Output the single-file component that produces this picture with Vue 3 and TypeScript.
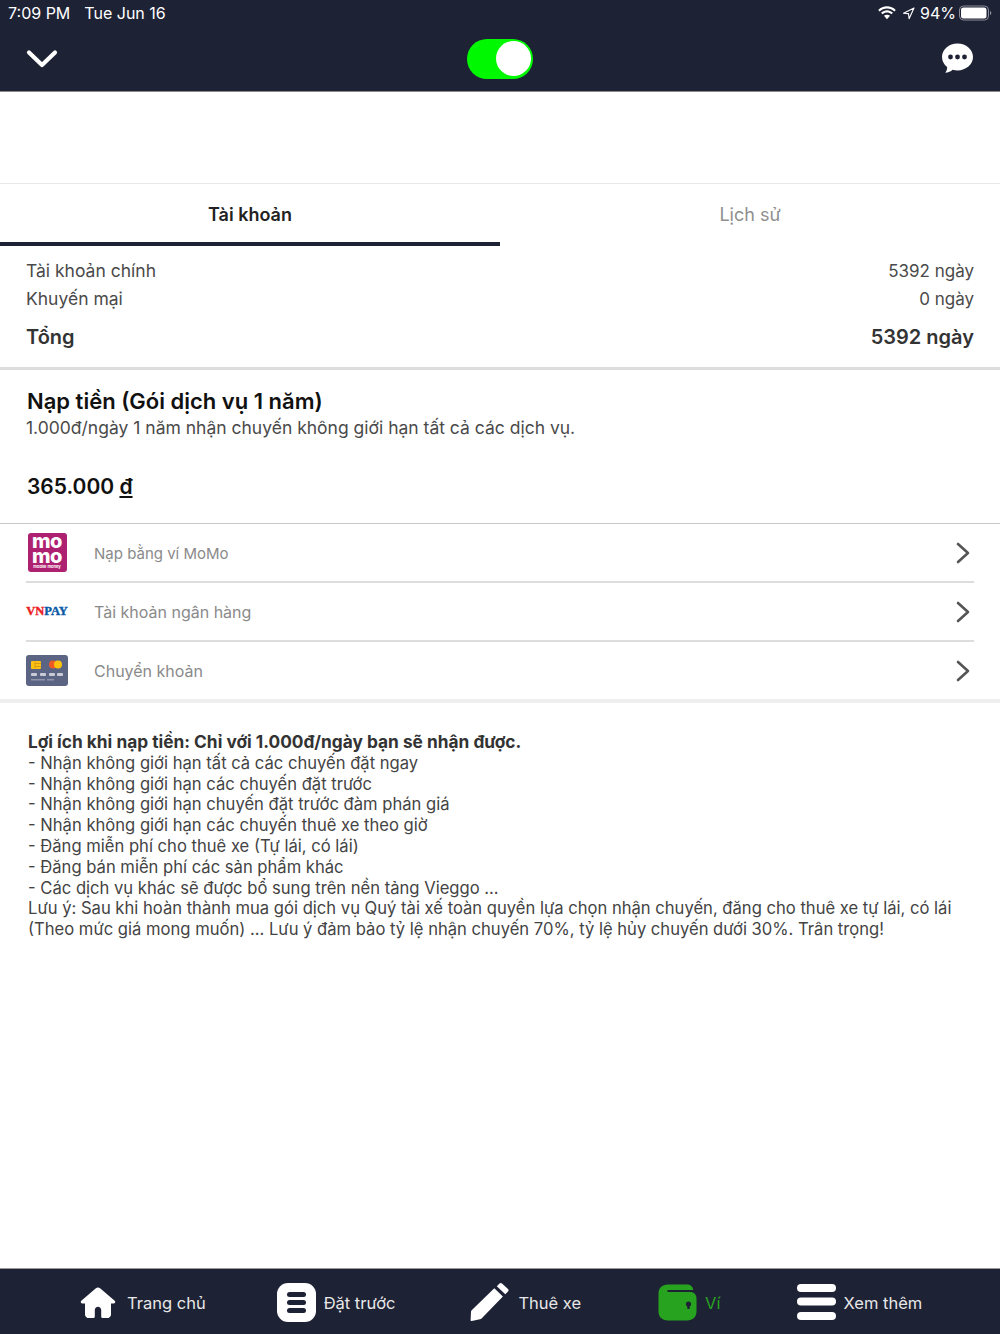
<script setup lang="ts">
const balances = [
  { label: 'Tài khoản chính', value: '5392 ngày' },
  { label: 'Khuyến mại', value: '0 ngày' },
]

const methods = [
  { id: 'momo', label: 'Nạp bằng ví MoMo' },
  { id: 'vnpay', label: 'Tài khoản ngân hàng' },
  { id: 'card', label: 'Chuyển khoản' },
]

const benefits = [
  '- Nhận không giới hạn tất cả các chuyến đặt ngay',
  '- Nhận không giới hạn các chuyến đặt trước',
  '- Nhận không giới hạn chuyến đặt trước đàm phán giá',
  '- Nhận không giới hạn các chuyến thuê xe theo giờ',
  '- Đăng miễn phí cho thuê xe (Tự lái, có lái)',
  '- Đăng bán miễn phí các sản phẩm khác',
  '- Các dịch vụ khác sẽ được bổ sung trên nền tảng Vieggo ...',
]
</script>

<template>
  <div class="page">
    <header class="top">
      <div class="status">
        <span class="status__time">7:09 PM</span>
        <span class="status__date">Tue Jun 16</span>
        <span class="status__right">
          <svg width="20" height="14" viewBox="0 0 17 12">
            <path d="M8.5 2.200c2.400 0 4.600.9 6.300 2.500l1.200-1.300C14 1.400 11.400.3 8.500.3S3 1.400 1 3.400l1.200 1.300c1.700-1.600 3.900-2.500 6.300-2.500z" fill="#fff" />
            <path d="M8.500 5.600c1.400 0 2.700.5 3.800 1.500l1.300-1.300C12.200 4.500 10.400 3.700 8.500 3.700s-3.700.8-5.100 2.100l1.300 1.300c1.100-1 2.400-1.500 3.800-1.500z" fill="#fff" />
            <path d="M8.500 7.400c-1 0-1.900.4-2.600 1l2.600 2.900 2.600-2.900c-.7-.6-1.600-1-2.600-1z" fill="#fff" />
          </svg>
          <svg width="13" height="13" viewBox="0 0 13 13">
            <path d="M12 1 1.500 6.200l5 .4.6 5.100z" fill="none" stroke="#fff" stroke-width="1.100" stroke-linejoin="round" />
          </svg>
          <span class="status__pct">94%</span>
          <svg width="33" height="16" viewBox="0 0 33 16">
            <rect x=".5" y="1" width="29" height="14" rx="4" fill="none" stroke="#8b8e99" />
            <rect x="2" y="2.500" width="25.500" height="11" rx="2.500" fill="#fff" />
            <path d="M31 6v4c.8-.3 1.300-1.100 1.300-2s-.5-1.700-1.300-2z" fill="#8b8e99" />
          </svg>
        </span>
      </div>
      <div class="nav">
        <svg class="nav__back" width="32" height="20" viewBox="0 0 32 20">
          <path d="M3 3.500 16 16 29 3.500" fill="none" stroke="#fff" stroke-width="4.200" stroke-linecap="round" stroke-linejoin="round" />
        </svg>
        <div class="switch"><span class="switch__knob"></span></div>
        <svg class="nav__chat" width="33" height="33" viewBox="0 0 33 33">
          <path d="M16.500 1.500C7.900 1.500 1 7.500 1 15c0 4 2 7.500 5.100 10 .2 1.600-.4 4-1.700 5.800 2.800-.2 5.500-1.300 7.300-3 1.500.4 3.100.6 4.800.6C25.100 28.400 32 22.400 32 15S25.100 1.500 16.500 1.500z" fill="#fff" />
          <circle cx="9.500" cy="15" r="2.400" fill="#1e2235" />
          <circle cx="16.500" cy="15" r="2.400" fill="#1e2235" />
          <circle cx="23.500" cy="15" r="2.400" fill="#1e2235" />
        </svg>
      </div>
    </header>

    <div class="spacer"></div>

    <div class="tabs">
      <div class="tab tab--active">Tài khoản</div>
      <div class="tab">Lịch sử</div>
    </div>

    <section class="summary">
      <div v-for="b in balances" :key="b.label" class="summary__row">
        <span class="summary__label">{{ b.label }}</span>
        <span class="summary__value">{{ b.value }}</span>
      </div>
      <div class="summary__row summary__row--total">
        <span>Tổng</span>
        <span>5392 ngày</span>
      </div>
    </section>

    <section class="plan">
      <h2 class="plan__title">Nạp tiền (Gói dịch vụ 1 năm)</h2>
      <p class="plan__desc">1.000đ/ngày 1 năm nhận chuyến không giới hạn tất cả các dịch vụ.</p>
      <div class="plan__price">365.000 <u>đ</u></div>
    </section>

    <section class="methods">
      <div v-for="m in methods" :key="m.id" class="method">
        <div class="method__icon">
          <div v-if="m.id === 'momo'" class="momo">
            <span class="momo__word">mo mo</span>
            <span class="momo__sub">mobile money</span>
          </div>
          <span v-else-if="m.id === 'vnpay'" class="vnpay"><span class="vnpay__vn">VN</span><span class="vnpay__pay">PAY</span></span>
          <svg v-else width="42" height="31" viewBox="0 0 42 31">
            <rect width="42" height="31" rx="3" fill="#5b6483" />
            <rect x="5" y="6" width="10" height="8" rx="1" fill="#fdc20f" />
            <path d="M9 6.500v7M9 8.500h6M9 11.500h6" stroke="#c9921a" stroke-width=".8" />
            <circle cx="27" cy="9.500" r="4" fill="#ef5a24" />
            <circle cx="32" cy="9.500" r="4" fill="#fdc20f" />
            <rect x="5" y="18" width="6" height="3" rx="1" fill="#c9ccd6" />
            <rect x="14" y="18" width="6" height="3" rx="1" fill="#c9ccd6" />
            <rect x="23" y="18" width="6" height="3" rx="1" fill="#c9ccd6" />
            <rect x="31" y="18" width="6" height="3" rx="1" fill="#c9ccd6" />
            <rect x="5" y="24" width="14" height="1.500" fill="#8f95ab" />
            <rect x="21" y="24" width="7" height="1.500" fill="#8f95ab" />
          </svg>
        </div>
        <span class="method__label" :class="{ 'method__label--small': m.id === 'momo' }">{{ m.label }}</span>
        <svg class="method__arrow" width="14" height="22" viewBox="0 0 14 22">
          <path d="M2 2 12 11 2 20" fill="none" stroke="#555" stroke-width="2.600" stroke-linecap="round" stroke-linejoin="round" />
        </svg>
      </div>
    </section>

    <section class="notes">
      <p class="notes__head">Lợi ích khi nạp tiền: Chỉ với 1.000đ/ngày bạn sẽ nhận được.</p>
      <p v-for="line in benefits" :key="line">{{ line }}</p>
      <p>Lưu ý: Sau khi hoàn thành mua gói dịch vụ Quý tài xế toàn quyền lựa chọn nhận chuyến, đăng cho thuê xe tự lái, có lái (Theo mức giá mong muốn) ... Lưu ý đảm bảo tỷ lệ nhận chuyến 70%, tỷ lệ hủy chuyến dưới 30%. Trân trọng!</p>
    </section>

    <footer class="bar">
      <div class="bar__item bar__item--home">
        <svg width="36" height="33" viewBox="0 0 36 36" preserveAspectRatio="none">
          <path d="M18 1.500c-.8 0-1.500.3-2.100.9L1.300 16c-1.100 1-.4 3 1.200 3h2.500v12c0 2.200 1.800 4 4 4h4c1 0 1.800-.8 1.800-1.800V26c0-1.900 1.500-3.400 3.200-3.400s3.200 1.500 3.200 3.400v7.200c0 1 .8 1.800 1.800 1.800h4c2.200 0 4-1.800 4-4V19h2.500c1.600 0 2.300-2 1.200-3L20.100 2.400c-.6-.6-1.300-.9-2.100-.9z" fill="#fff" />
        </svg>
        <span>Trang chủ</span>
      </div>
      <div class="bar__item">
        <svg width="39" height="39" viewBox="0 0 39 39">
          <rect width="39" height="39" rx="11" fill="#fff" />
          <rect x="10" y="9" width="19" height="5" rx="2.500" fill="#1e2235" />
          <rect x="10" y="17" width="19" height="5" rx="2.500" fill="#1e2235" />
          <rect x="10" y="25" width="19" height="5" rx="2.500" fill="#1e2235" />
        </svg>
        <span>Đặt trước</span>
      </div>
      <div class="bar__item">
        <svg width="40" height="40" viewBox="0 0 40 40">
          <path d="M29.500 1.500c.7-.7 1.800-.7 2.500 0l6 5.500c.7.700.7 1.800 0 2.500l-2.700 2.800-8.500-8z" fill="#fff" />
          <path d="M24.300 6.300l8.600 8.100-21.100 21.800c-.5.500-1.200.9-1.900 1L1.800 39c-.7.200-1.300-.4-1.200-1.100l.4-8c0-.6.300-1.200.7-1.600z" fill="#fff" />
        </svg>
        <span>Thuê xe</span>
      </div>
      <div class="bar__item bar__item--active">
        <svg width="39" height="37" viewBox="0 0 39 37">
          <path d="M10 .5h19c4 0 6 2.500 6.200 5.500H11c-1 0-1.800.3-1.800 1s.8 1 1.800 1h21c4 0 6.500 2.500 6.500 6.500V27c0 6-3.500 9.500-9.500 9.500H10C4 36.500.5 33 .5 27V10C.5 4 4 .5 10 .5z" fill="#27a31f" />
          <circle cx="30.500" cy="20" r="2.600" fill="#1e2235" />
          <rect x="29.300" y="20" width="2.400" height="5" fill="#1e2235" />
        </svg>
        <span>Ví</span>
      </div>
      <div class="bar__item">
        <svg width="39" height="36" viewBox="0 0 39 36">
          <rect width="39" height="8" rx="4" fill="#fff" />
          <rect y="13.500" width="39" height="8" rx="4" fill="#fff" />
          <rect y="28" width="39" height="8" rx="4" fill="#fff" />
        </svg>
        <span>Xem thêm</span>
      </div>
    </footer>
  </div>
</template>

<style>
body {
  margin: 0;
  background: #fff;
}
</style>

<style scoped>
.page {
  height: 1334px;
  display: flex;
  flex-direction: column;
  overflow: hidden;
  background: #fff;
  color: #333;
  font-family: Inter, "Noto Sans", sans-serif;
}

.top {
  height: 91px;
  flex: none;
  background: #1e2235;
  border-bottom: 1px solid #8a8a8a;
}
.status {
  height: 26px;
  display: flex;
  align-items: center;
  padding: 0 8px;
  color: #fff;
  font-size: 16px;
}
.status__date {
  margin-left: 14px;
}
.status__right {
  margin-left: auto;
  display: flex;
  align-items: center;
  gap: 5px;
}
.status__pct {
  margin: 0 -2px 0 0;
}

.nav {
  height: 65px;
  display: flex;
  align-items: center;
  justify-content: space-between;
  padding: 0 26px;
}
.switch {
  width: 66px;
  height: 40px;
  border-radius: 20px;
  background: #00f900;
  display: flex;
  align-items: center;
  justify-content: flex-end;
  padding-right: 2px;
  box-sizing: border-box;
  margin-left: 1px;
}
.switch__knob {
  width: 35px;
  height: 35px;
  border-radius: 50%;
  background: #fff;
}

.spacer {
  height: 91px;
  flex: none;
  border-bottom: 1px solid #e8e8e8;
}

.tabs {
  display: flex;
  height: 62px;
  flex: none;
}
.tab {
  flex: 1;
  display: flex;
  align-items: center;
  justify-content: center;
  padding-bottom: 2px;
  font-size: 18px;
  color: #8f8f8f;
  box-sizing: border-box;
}
.tab--active {
  color: #222;
  font-weight: 600;
  border-bottom: 4px solid #1e2235;
  padding: 2px 0 0;
}

.summary {
  padding: 10px 26px 6px;
  border-bottom: 3px solid #ddd;
  font-size: 18px;
  color: #4a4a4a;
}
.summary__row {
  display: flex;
  justify-content: space-between;
  height: 28px;
  align-items: center;
}
.summary__label {
  font-size: 17.500px;
}
.summary__value {
  font-size: 17px;
  padding-top: 2px;
}
.summary__row--total {
  height: 49px;
  font-size: 20px;
  font-weight: 600;
  color: #333;
}

.plan {
  padding: 18px 26px 0;
  height: 154px;
  box-sizing: border-box;
  border-bottom: 1px solid #c8c8c8;
}
.plan__title {
  margin: 0 0 0 1px;
  font-size: 22px;
  line-height: 27px;
  font-weight: 600;
  color: #111;
}
.plan__desc {
  margin: 1px 0 0;
  font-size: 17.500px;
  line-height: 24px;
  color: #4a4a4a;
}
.plan__price {
  margin: 33px 0 0 1px;
  font-size: 21px;
  line-height: 28px;
  font-weight: 600;
  color: #111;
}

.methods {
  padding-left: 26px;
  border-bottom: 4px solid #eee;
}
.method {
  height: 59px;
  display: flex;
  align-items: center;
  margin-right: 26px;
  border-bottom: 2px solid #ddd;
  box-sizing: border-box;
}
.method:last-child {
  border-bottom: 0;
  height: 57px;
}
.method__icon {
  width: 42px;
  display: flex;
  justify-content: center;
  margin-right: 26px;
}
.method__label {
  flex: 1;
  font-size: 16px;
  color: #8a8a8a;
}
.method__label--small {
  font-size: 15px;
  padding-top: 2px;
}
.method__arrow {
  margin-right: 4px;
}

.momo {
  width: 39px;
  height: 39px;
  border-radius: 3px;
  background: #ae2070;
  color: #fff;
  display: flex;
  flex-direction: column;
  align-items: center;
  font-weight: 800;
}
.momo__word {
  width: min-content;
  margin-top: 1px;
  font-size: 20px;
  line-height: 15px;
  letter-spacing: -0.5px;
  text-align: center;
}
.momo__sub {
  font-size: 4px;
  line-height: 6px;
  font-weight: 700;
  white-space: nowrap;
}
.vnpay {
  font-family: "Liberation Serif", serif;
  font-weight: 700;
  font-size: 12.500px;
  white-space: nowrap;
  -webkit-text-stroke: 0.4px currentColor;
}
.vnpay__vn {
  color: #ed1c24;
}
.vnpay__pay {
  color: #0b5aa8;
}

.notes {
  padding: 29px 26px 0 28px;
  font-size: 16.600px;
  line-height: 20.800px;
  color: #444;
}
.notes p {
  margin: 0;
}
.notes .notes__head {
  font-size: 17.300px;
  font-weight: 700;
  color: #333;
}

.bar {
  margin-top: auto;
  height: 66px;
  flex: none;
  box-sizing: border-box;
  background: #1e2235;
  border-top: 1px solid #999;
  display: flex;
  align-items: center;
  padding: 1px 0 0 80px;
  gap: 71px;
  color: #e8e8e8;
  font-size: 16.500px;
}
.bar__item {
  display: flex;
  align-items: center;
  gap: 8px;
  white-space: nowrap;
}
.bar__item span {
  margin-top: 2px;
}
.bar__item--home {
  gap: 11px;
}
.bar__item:nth-child(3) {
  margin-left: 4px;
}
.bar__item:nth-child(4) {
  margin-left: 6px;
}
.bar__item:nth-child(5) {
  margin-left: 5px;
}
.bar__item--active {
  color: #27a31f;
}
</style>
